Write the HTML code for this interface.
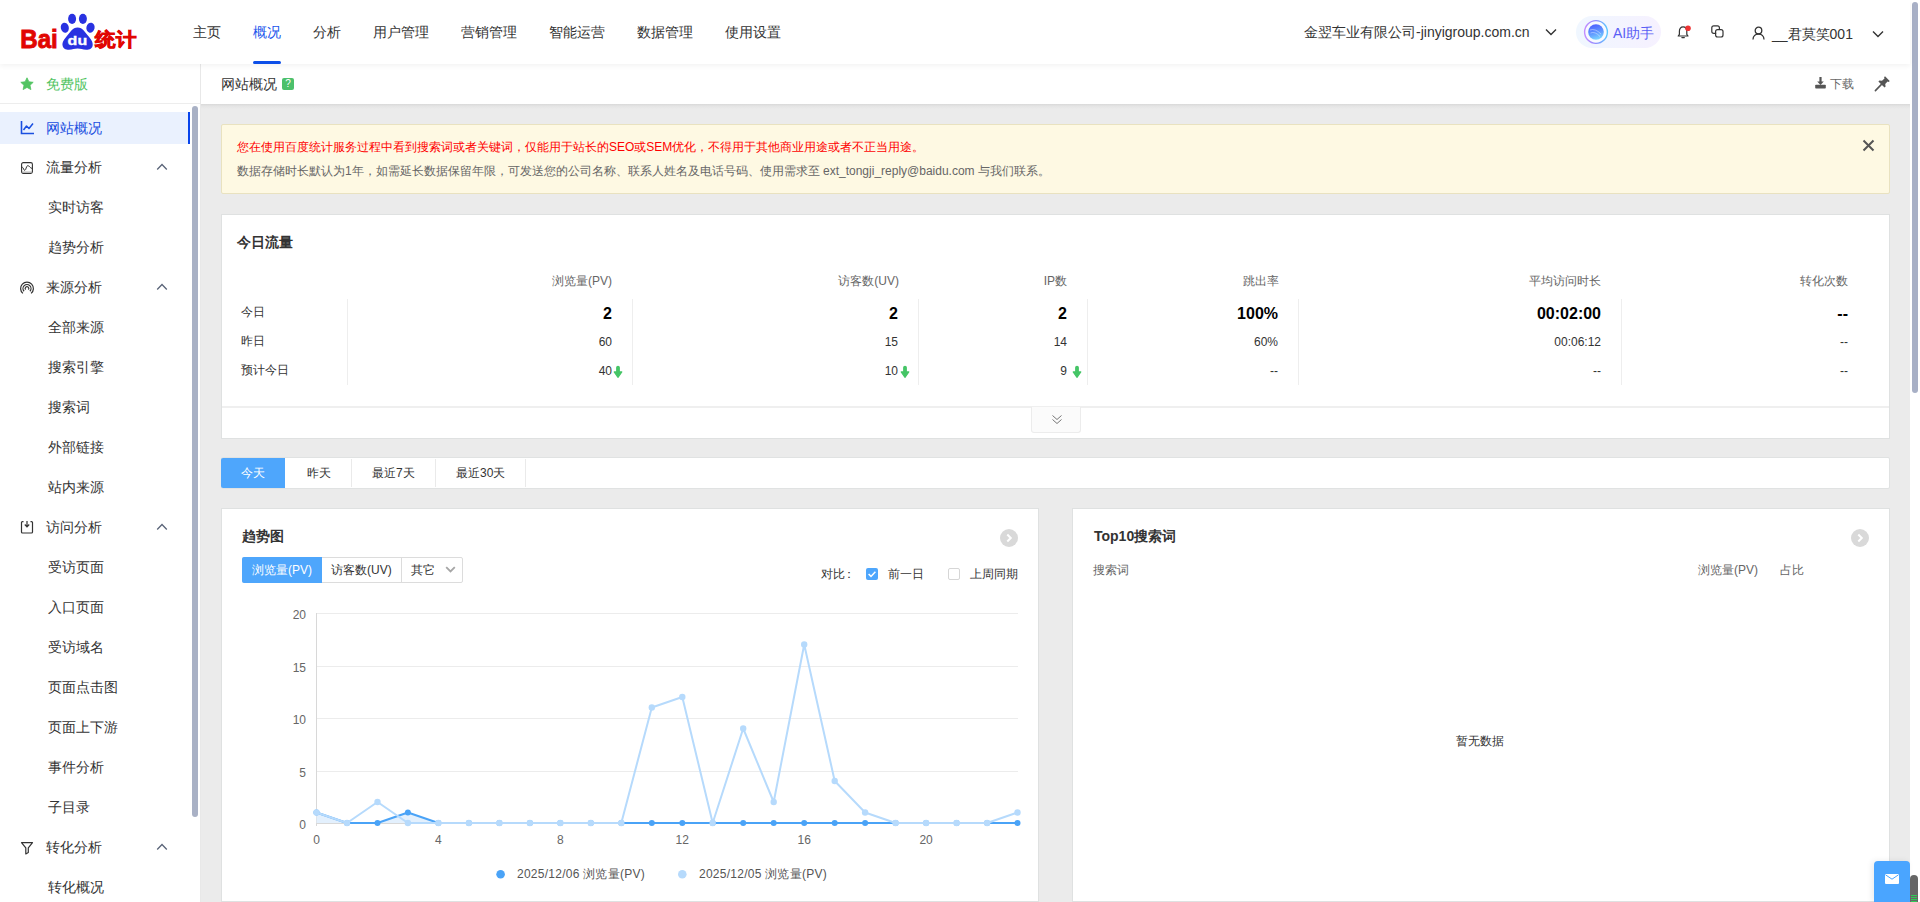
<!DOCTYPE html>
<html><head><meta charset="utf-8">
<style>
*{margin:0;padding:0;box-sizing:border-box}
html,body{width:1920px;height:902px;overflow:hidden;background:#fff}
body{font-family:"Liberation Sans",sans-serif;color:#333;font-size:12px;position:relative}
.a{position:absolute;white-space:nowrap}
svg{position:absolute;overflow:visible}
#hdr{position:absolute;left:0;top:0;width:1910px;height:64px;background:#fff;box-shadow:0 2px 5px rgba(0,0,0,.05);z-index:5}
.nav{position:absolute;top:23px;font-size:14px;line-height:18px;color:#333;white-space:nowrap}
#side{position:absolute;left:0;top:64px;width:201px;height:838px;background:#fff;border-right:1px solid #e8e8e8}
.mi{position:absolute;left:46px;font-size:14px;line-height:18px;color:#333;white-space:nowrap}
.si{position:absolute;left:48px;font-size:14px;line-height:18px;color:#333;white-space:nowrap}
.chev{position:absolute;left:156px;width:12px;height:8px}
#main{position:absolute;left:201px;top:64px;width:1709px;height:838px;background:#ebebeb}
.card{position:absolute;background:#fff;border:1px solid #dfe1e1}
.th{position:absolute;font-size:12px;line-height:16px;color:#666;white-space:nowrap;text-align:right}
.td{position:absolute;font-size:12px;line-height:16px;color:#333;white-space:nowrap;text-align:right}
.tb{position:absolute;font-size:16px;line-height:20px;color:#000;font-weight:bold;white-space:nowrap;text-align:right}
.vd{position:absolute;top:299px;width:1px;height:86px;background:#eee}
</style></head><body>
<!-- HEADER -->
<div id="hdr">
  <svg style="left:0;top:0" width="150" height="64" viewBox="0 0 150 64">
    <text x="20.3" y="48.2" font-family="Liberation Sans" font-weight="bold" font-size="26" fill="#e10602" stroke="#e10602" stroke-width="0.9" textLength="37.5" lengthAdjust="spacingAndGlyphs">Bai</text>
    <ellipse cx="72.1" cy="18.8" rx="4" ry="5.1" fill="#2932e1"/>
    <ellipse cx="82.9" cy="18.8" rx="4" ry="5.1" fill="#2932e1"/>
    <ellipse cx="64.8" cy="27.7" rx="4" ry="5.1" transform="rotate(-12 64.8 27.7)" fill="#2932e1"/>
    <ellipse cx="90.5" cy="27.7" rx="4.1" ry="5.1" transform="rotate(12 90.5 27.7)" fill="#2932e1"/>
    <path d="M77.6 27.5 C72.5 27.5 70 32.5 66.5 36.5 C63 40.5 62.3 43 62.5 45 C62.8 48.5 65.5 49.7 69 49.7 C72.5 49.7 74.5 48.6 77.6 48.6 C80.7 48.6 82.7 49.7 86.2 49.7 C89.7 49.7 92.5 48.5 92.7 45 C92.9 43 92.2 40.5 88.7 36.5 C85.2 32.5 82.7 27.5 77.6 27.5Z" fill="#2932e1"/>
    <text x="67.6" y="44.6" font-family="Liberation Sans" font-weight="bold" font-size="12.5" fill="#fff" stroke="#fff" stroke-width="0.3" textLength="19.6" lengthAdjust="spacingAndGlyphs">du</text>
    <text x="95.3" y="45.6" font-weight="bold" font-size="19.2" fill="#e10602" stroke="#e10602" stroke-width="0.7" textLength="41" lengthAdjust="spacingAndGlyphs" style="font-family:'Liberation Sans',sans-serif">统计</text>
  </svg>
  <div class="nav" style="left:193px">主页</div>
  <div class="nav" style="left:253px;color:#1a55ec">概况</div>
  <div class="a" style="left:253px;top:61px;width:28px;height:3px;background:#0d4fe8;border-radius:2px"></div>
  <div class="nav" style="left:313px">分析</div>
  <div class="nav" style="left:373px">用户管理</div>
  <div class="nav" style="left:461px">营销管理</div>
  <div class="nav" style="left:549px">智能运营</div>
  <div class="nav" style="left:637px">数据管理</div>
  <div class="nav" style="left:725px">使用设置</div>

  <div class="nav" style="left:1304px;top:23px">金翌车业有限公司-jinyigroup.com.cn</div>
  <svg style="left:1545px;top:28px" width="12" height="8" viewBox="0 0 12 8"><path d="M1 1.5 L6 6.5 L11 1.5" fill="none" stroke="#333" stroke-width="1.4"/></svg>
  <div class="a" style="left:1576px;top:16px;width:85px;height:32px;border-radius:16px;background:linear-gradient(90deg,#f0f7ff,#f6f1ff)"></div>
  <svg style="left:1583px;top:19px" width="26" height="26" viewBox="0 0 26 26">
    <defs><linearGradient id="ring" x1="0" y1="0.5" x2="1" y2="0.5"><stop offset="0" stop-color="#c48cff"/><stop offset="0.5" stop-color="#8f8cff"/><stop offset="1" stop-color="#5cc8ff"/></linearGradient>
    <linearGradient id="orb" x1="0.3" y1="0" x2="0.6" y2="1"><stop offset="0" stop-color="#3a4dff"/><stop offset="0.55" stop-color="#4f8dff"/><stop offset="1" stop-color="#6fd6ff"/></linearGradient></defs>
    <circle cx="13" cy="13" r="11.4" fill="#f8faff" stroke="url(#ring)" stroke-width="1.4"/>
    <circle cx="13" cy="13" r="7.8" fill="url(#orb)" opacity="0.9"/>
    <path d="M7 11 Q12 9 18 15 M7.5 14 Q12 12 17 17.5" fill="none" stroke="#fff" stroke-width="0.9" opacity="0.45"/>
  </svg>
  <div class="nav" style="left:1613px;top:24px;color:#5a5ef5">AI助手</div>
  <svg style="left:1677px;top:25px" width="14" height="14" viewBox="0 0 14 14">
    <path d="M1.2 11 L11 11 L9.8 9.4 L9.8 6.3 C9.8 3.6 8.4 1.9 6.1 1.9 C3.8 1.9 2.4 3.6 2.4 6.3 L2.4 9.4 Z" fill="none" stroke="#333" stroke-width="1.2" stroke-linejoin="round"/>
    <path d="M4.9 12.6 L7.3 12.6" stroke="#333" stroke-width="1.3" stroke-linecap="round"/>
    <circle cx="11" cy="3.2" r="2.8" fill="#ee3333"/>
  </svg>
  <svg style="left:1711px;top:25px" width="13" height="13" viewBox="0 0 13 13">
    <path d="M5.2 8.4 L2.8 8.4 Q0.8 8.4 0.8 6.4 L0.8 2.8 Q0.8 0.8 2.8 0.8 L6.4 0.8 Q8.4 0.8 8.4 2.8 L8.4 5" fill="none" stroke="#333" stroke-width="1.2"/>
    <path d="M4.6 6.6 Q4.6 4.6 6.6 4.6 L10 4.6 Q12 4.6 12 6.6 L12 10 Q12 12 10 12 L6.6 12 Q4.6 12 4.6 10 Z" fill="none" stroke="#333" stroke-width="1.2"/>
  </svg>
  <svg style="left:1752px;top:26px" width="13" height="14" viewBox="0 0 13 14">
    <circle cx="6.5" cy="4.5" r="3.3" fill="none" stroke="#333" stroke-width="1.3"/>
    <path d="M1 13.5 C1 10 3.5 8 6.5 8 C9.5 8 12 10 12 13.5" fill="none" stroke="#333" stroke-width="1.3"/>
  </svg>
  <div class="nav" style="left:1772px;top:25px">__君莫笑001</div>
  <svg style="left:1872px;top:30px" width="12" height="8" viewBox="0 0 12 8"><path d="M1 1.5 L6 6.5 L11 1.5" fill="none" stroke="#333" stroke-width="1.4"/></svg>
</div>
<!-- page scrollbar -->
<div class="a" style="left:1910px;top:0;width:10px;height:902px;background:#fff"></div>
<div class="a" style="left:1912px;top:2px;width:6px;height:391px;border-radius:3px;background:#a8b0c6"></div>
<!-- SIDEBAR -->
<div id="side">
  <svg style="left:20px;top:13px" width="14" height="14" viewBox="0 0 14 14"><path d="M7 0.8 L8.9 4.8 L13.2 5.3 L10 8.3 L10.9 12.6 L7 10.4 L3.1 12.6 L4 8.3 L0.8 5.3 L5.1 4.8Z" fill="#52c462" stroke="#52c462" stroke-width="0.8" stroke-linejoin="round"/></svg>
  <div class="mi" style="top:11px;color:#52c462">免费版</div>
  <div class="a" style="left:0;top:39px;width:200px;height:1px;background:#ededed"></div>
  <div class="a" style="left:0;top:48px;width:190px;height:32px;background:#eaf1fe"></div>
  <div class="a" style="left:188px;top:48px;width:2px;height:32px;background:#0844ec"></div>
  <svg style="left:20px;top:56px" width="15" height="15" viewBox="0 0 15 15"><path d="M1.5 1 L1.5 13.5 L14 13.5" fill="none" stroke="#1a4fe0" stroke-width="1.6"/><path d="M3.5 10 L6.5 6 L9 8.5 L13 3.5" fill="none" stroke="#1a4fe0" stroke-width="1.5" stroke-linejoin="round"/></svg>
  <div class="mi" style="top:55px;color:#1a4fe0">网站概况</div>

  <svg style="left:21px;top:162px;top:98px" width="12" height="12" viewBox="0 0 12 12"><rect x="0.6" y="0.6" width="10.8" height="10.8" rx="1.6" fill="none" stroke="#333" stroke-width="1.1"/><path d="M0.6 5.4 L1.6 5.4 C2.4 5.4 2.6 8.4 3.8 8.4 C5 8.4 5.2 3.6 6.8 3.6 C8.4 3.6 8.6 5.8 11.4 6.6" fill="none" stroke="#333" stroke-width="1"/><path d="M1 10 L11 10" stroke="#aaa" stroke-width="0.9"/></svg>
  <div class="mi" style="top:94px">流量分析</div>
  <svg class="chev" style="top:99px" viewBox="0 0 12 8"><path d="M1.2 6.5 L6 1.5 L10.8 6.5" fill="none" stroke="#5a6478" stroke-width="1.3"/></svg>
  <div class="si" style="top:134px">实时访客</div>
  <div class="si" style="top:174px">趋势分析</div>

  <svg style="left:20px;top:217px" width="14" height="14" viewBox="0 0 14 14"><path d="M2.88 12.4 A6.4 6.4 0 1 1 11.12 12.4" fill="none" stroke="#333" stroke-width="1.2"/><path d="M4.08 10.23 A4 4 0 1 1 9.92 10.23" fill="none" stroke="#333" stroke-width="1.2"/><path d="M5.53 8.53 A1.8 1.8 0 1 1 8.47 8.53" fill="none" stroke="#333" stroke-width="1.2"/></svg>
  <div class="mi" style="top:214px">来源分析</div>
  <svg class="chev" style="top:219px" viewBox="0 0 12 8"><path d="M1.2 6.5 L6 1.5 L10.8 6.5" fill="none" stroke="#5a6478" stroke-width="1.3"/></svg>
  <div class="si" style="top:254px">全部来源</div>
  <div class="si" style="top:294px">搜索引擎</div>
  <div class="si" style="top:334px">搜索词</div>
  <div class="si" style="top:374px">外部链接</div>
  <div class="si" style="top:414px">站内来源</div>

  <svg style="left:20px;top:456px" width="14" height="14" viewBox="0 0 14 14"><path d="M3.5 1.6 L2.5 1.6 Q1.5 1.6 1.5 2.6 L1.5 12 Q1.5 13 2.5 13 L11.5 13 Q12.5 13 12.5 12 L12.5 2.6 Q12.5 1.6 11.5 1.6 L10.5 1.6" fill="none" stroke="#333" stroke-width="1.2"/><path d="M7 1 L7 6.5 M4.8 4.5 L7 6.8 L9.2 4.5" fill="none" stroke="#333" stroke-width="1.2"/></svg>
  <div class="mi" style="top:454px">访问分析</div>
  <svg class="chev" style="top:459px" viewBox="0 0 12 8"><path d="M1.2 6.5 L6 1.5 L10.8 6.5" fill="none" stroke="#5a6478" stroke-width="1.3"/></svg>
  <div class="si" style="top:494px">受访页面</div>
  <div class="si" style="top:534px">入口页面</div>
  <div class="si" style="top:574px">受访域名</div>
  <div class="si" style="top:614px">页面点击图</div>
  <div class="si" style="top:654px">页面上下游</div>
  <div class="si" style="top:694px">事件分析</div>
  <div class="si" style="top:734px">子目录</div>

  <svg style="left:20px;top:777px" width="14" height="14" viewBox="0 0 14 14"><path d="M1.5 1.6 L12.5 1.6 L8.3 6.8 L8.3 11.5 L5.8 12.9 L5.8 6.8 Z" fill="none" stroke="#333" stroke-width="1.2" stroke-linejoin="round"/></svg>
  <div class="mi" style="top:774px">转化分析</div>
  <svg class="chev" style="top:779px" viewBox="0 0 12 8"><path d="M1.2 6.5 L6 1.5 L10.8 6.5" fill="none" stroke="#5a6478" stroke-width="1.3"/></svg>
  <div class="si" style="top:814px">转化概况</div>
  <div class="a" style="left:192px;top:42px;width:6px;height:711px;border-radius:3px;background:#a9b1c5"></div>
</div>
<!-- MAIN -->
<div id="main"></div>
<div class="a" style="left:201px;top:64px;width:1709px;height:40px;background:#fff"></div>
<div class="a" style="left:201px;top:104px;width:1709px;height:5px;background:linear-gradient(#d9d9d9,#e4e4e4 40%,#ebebeb)"></div>
<div class="a" style="left:221px;top:75px;font-size:14px;line-height:18px;color:#333">网站概况</div>
<div class="a" style="left:282px;top:78px;width:12px;height:12px;border-radius:2px;background:#4cc06b;color:#fff;font-size:10px;line-height:12px;text-align:center">?</div>
<svg style="left:1815px;top:77px" width="11" height="12" viewBox="0 0 11 12"><path d="M5.5 0 L5.5 5" stroke="#555" stroke-width="2.2"/><path d="M2.2 4.4 L5.5 8 L8.8 4.4Z" fill="#555"/><rect x="0.2" y="7.8" width="10.6" height="3.8" rx="0.8" fill="#555"/></svg>
<div class="a" style="left:1830px;top:76px;font-size:12px;line-height:16px;color:#666">下载</div>
<svg style="left:1875px;top:76px" width="15" height="15" viewBox="0 0 15 15"><path d="M10 0.3 L14.7 5 L13.8 5.9 L12.6 5.5 L10.2 8 L10.6 10.6 L9.6 11.6 L6.4 8.4 L3.4 5.4 L4.4 4.4 L7 4.8 L9.5 2.4 L9.1 1.2 Z" fill="#555"/><path d="M6.2 8.6 L0.4 14.6" stroke="#555" stroke-width="1.6" stroke-linecap="round"/></svg>

<!-- notice -->
<div class="a" style="left:221px;top:124px;width:1669px;height:70px;background:#fef9e3;border:1px solid #e9e2c0;border-radius:2px"></div>
<div class="a" style="left:237px;top:139px;font-size:12px;line-height:16px;color:#f00">您在使用百度统计服务过程中看到搜索词或者关键词，仅能用于站长的SEO或SEM优化，不得用于其他商业用途或者不正当用途。</div>
<div class="a" style="left:237px;top:163px;font-size:12px;line-height:16px;color:#666">数据存储时长默认为1年，如需延长数据保留年限，可发送您的公司名称、联系人姓名及电话号码、使用需求至 ext_tongji_reply@baidu.com 与我们联系。</div>
<svg style="left:1862px;top:139px" width="13" height="13" viewBox="0 0 13 13"><path d="M1.5 1.5 L11.5 11.5 M11.5 1.5 L1.5 11.5" stroke="#555" stroke-width="2"/></svg>

<!-- today card -->
<div class="card" style="left:221px;top:214px;width:1669px;height:225px"></div>
<div class="a" style="left:237px;top:233px;font-size:14px;line-height:18px;color:#333;font-weight:bold">今日流量</div>
<div class="th" style="right:1308px;top:273px">浏览量(PV)</div>
<div class="th" style="right:1021px;top:273px">访客数(UV)</div>
<div class="th" style="right:853px;top:273px">IP数</div>
<div class="th" style="right:641px;top:273px">跳出率</div>
<div class="th" style="right:319px;top:273px">平均访问时长</div>
<div class="th" style="right:72px;top:273px">转化次数</div>
<div class="a" style="left:241px;top:304px;font-size:12px;line-height:16px;color:#333">今日</div>
<div class="a" style="left:241px;top:333px;font-size:12px;line-height:16px;color:#333">昨日</div>
<div class="a" style="left:241px;top:362px;font-size:12px;line-height:16px;color:#333">预计今日</div>
<div class="vd" style="left:347px"></div>
<div class="vd" style="left:632px"></div>
<div class="vd" style="left:918px"></div>
<div class="vd" style="left:1087px"></div>
<div class="vd" style="left:1298px"></div>
<div class="vd" style="left:1621px"></div>
<div class="tb" style="right:1308px;top:304px">2</div>
<div class="tb" style="right:1022px;top:304px">2</div>
<div class="tb" style="right:853px;top:304px">2</div>
<div class="tb" style="right:642px;top:304px">100%</div>
<div class="tb" style="right:319px;top:304px">00:02:00</div>
<div class="tb" style="right:72px;top:304px">--</div>
<div class="td" style="right:1308px;top:334px">60</div>
<div class="td" style="right:1022px;top:334px">15</div>
<div class="td" style="right:853px;top:334px">14</div>
<div class="td" style="right:642px;top:334px">60%</div>
<div class="td" style="right:319px;top:334px">00:06:12</div>
<div class="td" style="right:72px;top:334px">--</div>
<div class="td" style="right:1308px;top:363px">40</div>
<div class="td" style="right:1022px;top:363px">10</div>
<div class="td" style="right:853px;top:363px">9</div>
<div class="td" style="right:642px;top:363px">--</div>
<div class="td" style="right:319px;top:363px">--</div>
<div class="td" style="right:72px;top:363px">--</div>
<svg style="left:613px;top:365px" width="10" height="13" viewBox="0 0 10 13"><rect x="3.1" y="0.8" width="3.8" height="8" rx="1.9" fill="#45c566"/><path d="M1.2 6.9 L8.8 6.9 L5 12.3Z" fill="#45c566" stroke="#45c566" stroke-width="1.2" stroke-linejoin="round"/></svg>
<svg style="left:900px;top:365px" width="10" height="13" viewBox="0 0 10 13"><rect x="3.1" y="0.8" width="3.8" height="8" rx="1.9" fill="#45c566"/><path d="M1.2 6.9 L8.8 6.9 L5 12.3Z" fill="#45c566" stroke="#45c566" stroke-width="1.2" stroke-linejoin="round"/></svg>
<svg style="left:1072px;top:365px" width="10" height="13" viewBox="0 0 10 13"><rect x="3.1" y="0.8" width="3.8" height="8" rx="1.9" fill="#45c566"/><path d="M1.2 6.9 L8.8 6.9 L5 12.3Z" fill="#45c566" stroke="#45c566" stroke-width="1.2" stroke-linejoin="round"/></svg>
<div class="a" style="left:222px;top:406px;width:1667px;height:2px;background:#efefef"></div>
<div class="a" style="left:1031px;top:407px;width:50px;height:26px;background:#fbfbfb;border:1px solid #ececec;border-top:none;border-radius:0 0 3px 3px"></div>
<svg style="left:1051px;top:414px" width="12" height="11" viewBox="0 0 12 11"><path d="M1.5 1.5 L6 5.5 L10.5 1.5 M1.5 5.5 L6 9.5 L10.5 5.5" fill="none" stroke="#777" stroke-width="1"/></svg>

<!-- tabs -->
<div class="a" style="left:221px;top:457px;width:1669px;height:32px;background:#fff;border:1px solid #e0e2e2;border-radius:2px"></div>
<div class="a" style="left:221px;top:458px;width:64px;height:30px;background:#4ea6fc;border-radius:2px 0 0 2px"></div>
<div class="a" style="left:351px;top:459px;width:1px;height:28px;background:#eaeaea"></div>
<div class="a" style="left:435px;top:459px;width:1px;height:28px;background:#eaeaea"></div>
<div class="a" style="left:525px;top:459px;width:1px;height:28px;background:#eaeaea"></div>
<div class="a" style="left:241px;top:465px;font-size:12px;line-height:16px;color:#fff">今天</div>
<div class="a" style="left:307px;top:465px;font-size:12px;line-height:16px;color:#333">昨天</div>
<div class="a" style="left:372px;top:465px;font-size:12px;line-height:16px;color:#333">最近7天</div>
<div class="a" style="left:456px;top:465px;font-size:12px;line-height:16px;color:#333">最近30天</div>
<!-- trend card -->
<div class="card" style="left:221px;top:508px;width:818px;height:394px"></div>
<div class="a" style="left:242px;top:527px;font-size:14px;line-height:18px;color:#333;font-weight:bold">趋势图</div>
<svg style="left:1000px;top:529px" width="18" height="18" viewBox="0 0 18 18"><circle cx="9" cy="9" r="9" fill="#d9d9d9"/><path d="M7.3 5.5 L10.8 9 L7.3 12.5" fill="none" stroke="#fff" stroke-width="2"/></svg>
<div class="a" style="left:242px;top:557px;width:221px;height:26px;border:1px solid #dcdcdc;border-radius:2px;background:#fff"></div>
<div class="a" style="left:242px;top:557px;width:80px;height:26px;background:#4ea6fc;border-radius:2px 0 0 2px"></div>
<div class="a" style="left:401px;top:558px;width:1px;height:24px;background:#dcdcdc"></div>
<div class="a" style="left:252px;top:562px;font-size:12px;line-height:16px;color:#fff">浏览量(PV)</div>
<div class="a" style="left:331px;top:562px;font-size:12px;line-height:16px;color:#333">访客数(UV)</div>
<div class="a" style="left:411px;top:562px;font-size:12px;line-height:16px;color:#333">其它</div>
<svg style="left:445px;top:566px" width="11" height="7" viewBox="0 0 11 7"><path d="M1.2 1.2 L5.5 5.5 L9.8 1.2" fill="none" stroke="#a6a6a6" stroke-width="1.8"/></svg>
<div class="a" style="left:821px;top:566px;font-size:12px;line-height:16px;color:#333">对比</div><div class="a" style="left:843px;top:566px;font-size:12px;line-height:16px;color:#333">：</div>
<div class="a" style="left:866px;top:568px;width:12px;height:12px;border-radius:2px;background:#4ea6fc"></div>
<svg style="left:866px;top:568px" width="12" height="12" viewBox="0 0 12 12"><path d="M2.6 6 L5 8.4 L9.4 3.8" fill="none" stroke="#fff" stroke-width="1.5"/></svg>
<div class="a" style="left:888px;top:566px;font-size:12px;line-height:16px;color:#333">前一日</div>
<div class="a" style="left:948px;top:568px;width:12px;height:12px;border-radius:2px;border:1px solid #d6d6d6;background:#fff"></div>
<div class="a" style="left:970px;top:566px;font-size:12px;line-height:16px;color:#333">上周同期</div>
<svg style="left:0;top:0" width="1920" height="902" viewBox="0 0 1920 902">
<line x1="316.5" y1="771.5" x2="1018" y2="771.5" stroke="#ececec" stroke-width="1"/>
<line x1="316.5" y1="718.5" x2="1018" y2="718.5" stroke="#ececec" stroke-width="1"/>
<line x1="316.5" y1="666.5" x2="1018" y2="666.5" stroke="#ececec" stroke-width="1"/>
<line x1="316.5" y1="613.5" x2="1018" y2="613.5" stroke="#ececec" stroke-width="1"/>
<line x1="316.5" y1="613" x2="316.5" y2="826" stroke="#d8d8d8" stroke-width="1"/>
<line x1="316.5" y1="823.5" x2="1018" y2="823.5" stroke="#d8d8d8" stroke-width="1"/>
<path d="M316.5,823.0 L316.5,812.5 L347.0,823.0 L377.5,823.0 L407.9,812.5 L438.4,823.0 L468.9,823.0 L499.4,823.0 L529.9,823.0 L560.3,823.0 L590.8,823.0 L621.3,823.0 L651.8,823.0 L682.3,823.0 L712.7,823.0 L743.2,823.0 L773.7,823.0 L804.2,823.0 L834.7,823.0 L865.1,823.0 L895.6,823.0 L926.1,823.0 L956.6,823.0 L987.1,823.0 L1017.5,823.0 L1017.5,823.0 Z" fill="#e3f0fd"/>
<polyline points="316.5,812.5 347.0,823.0 377.5,823.0 407.9,812.5 438.4,823.0 468.9,823.0 499.4,823.0 529.9,823.0 560.3,823.0 590.8,823.0 621.3,823.0 651.8,823.0 682.3,823.0 712.7,823.0 743.2,823.0 773.7,823.0 804.2,823.0 834.7,823.0 865.1,823.0 895.6,823.0 926.1,823.0 956.6,823.0 987.1,823.0 1017.5,823.0" fill="none" stroke="#4aa3f7" stroke-width="2" stroke-linejoin="round"/>
<circle cx="316.5" cy="812.5" r="3" fill="#4aa3f7"/>
<circle cx="347.0" cy="823.0" r="3" fill="#4aa3f7"/>
<circle cx="377.5" cy="823.0" r="3" fill="#4aa3f7"/>
<circle cx="407.9" cy="812.5" r="3" fill="#4aa3f7"/>
<circle cx="438.4" cy="823.0" r="3" fill="#4aa3f7"/>
<circle cx="468.9" cy="823.0" r="3" fill="#4aa3f7"/>
<circle cx="499.4" cy="823.0" r="3" fill="#4aa3f7"/>
<circle cx="529.9" cy="823.0" r="3" fill="#4aa3f7"/>
<circle cx="560.3" cy="823.0" r="3" fill="#4aa3f7"/>
<circle cx="590.8" cy="823.0" r="3" fill="#4aa3f7"/>
<circle cx="621.3" cy="823.0" r="3" fill="#4aa3f7"/>
<circle cx="651.8" cy="823.0" r="3" fill="#4aa3f7"/>
<circle cx="682.3" cy="823.0" r="3" fill="#4aa3f7"/>
<circle cx="712.7" cy="823.0" r="3" fill="#4aa3f7"/>
<circle cx="743.2" cy="823.0" r="3" fill="#4aa3f7"/>
<circle cx="773.7" cy="823.0" r="3" fill="#4aa3f7"/>
<circle cx="804.2" cy="823.0" r="3" fill="#4aa3f7"/>
<circle cx="834.7" cy="823.0" r="3" fill="#4aa3f7"/>
<circle cx="865.1" cy="823.0" r="3" fill="#4aa3f7"/>
<circle cx="895.6" cy="823.0" r="3" fill="#4aa3f7"/>
<circle cx="926.1" cy="823.0" r="3" fill="#4aa3f7"/>
<circle cx="956.6" cy="823.0" r="3" fill="#4aa3f7"/>
<circle cx="987.1" cy="823.0" r="3" fill="#4aa3f7"/>
<circle cx="1017.5" cy="823.0" r="3" fill="#4aa3f7"/>
<polyline points="316.5,812.5 347.0,823.0 377.5,802.0 407.9,823.0 438.4,823.0 468.9,823.0 499.4,823.0 529.9,823.0 560.3,823.0 590.8,823.0 621.3,823.0 651.8,707.5 682.3,697.0 712.7,823.0 743.2,728.5 773.7,802.0 804.2,644.5 834.7,781.0 865.1,812.5 895.6,823.0 926.1,823.0 956.6,823.0 987.1,823.0 1017.5,812.5" fill="none" stroke="#b6dafc" stroke-width="2" stroke-linejoin="round"/>
<circle cx="316.5" cy="812.5" r="3.2" fill="#b6dafc"/>
<circle cx="347.0" cy="823.0" r="3.2" fill="#b6dafc"/>
<circle cx="377.5" cy="802.0" r="3.2" fill="#b6dafc"/>
<circle cx="407.9" cy="823.0" r="3.2" fill="#b6dafc"/>
<circle cx="438.4" cy="823.0" r="3.2" fill="#b6dafc"/>
<circle cx="468.9" cy="823.0" r="3.2" fill="#b6dafc"/>
<circle cx="499.4" cy="823.0" r="3.2" fill="#b6dafc"/>
<circle cx="529.9" cy="823.0" r="3.2" fill="#b6dafc"/>
<circle cx="560.3" cy="823.0" r="3.2" fill="#b6dafc"/>
<circle cx="590.8" cy="823.0" r="3.2" fill="#b6dafc"/>
<circle cx="621.3" cy="823.0" r="3.2" fill="#b6dafc"/>
<circle cx="651.8" cy="707.5" r="3.2" fill="#b6dafc"/>
<circle cx="682.3" cy="697.0" r="3.2" fill="#b6dafc"/>
<circle cx="712.7" cy="823.0" r="3.2" fill="#b6dafc"/>
<circle cx="743.2" cy="728.5" r="3.2" fill="#b6dafc"/>
<circle cx="773.7" cy="802.0" r="3.2" fill="#b6dafc"/>
<circle cx="804.2" cy="644.5" r="3.2" fill="#b6dafc"/>
<circle cx="834.7" cy="781.0" r="3.2" fill="#b6dafc"/>
<circle cx="865.1" cy="812.5" r="3.2" fill="#b6dafc"/>
<circle cx="895.6" cy="823.0" r="3.2" fill="#b6dafc"/>
<circle cx="926.1" cy="823.0" r="3.2" fill="#b6dafc"/>
<circle cx="956.6" cy="823.0" r="3.2" fill="#b6dafc"/>
<circle cx="987.1" cy="823.0" r="3.2" fill="#b6dafc"/>
<circle cx="1017.5" cy="812.5" r="3.2" fill="#b6dafc"/>
<text x="306" y="829.0" text-anchor="end" font-size="12" fill="#666" font-family="Liberation Sans">0</text>
<text x="306" y="776.5" text-anchor="end" font-size="12" fill="#666" font-family="Liberation Sans">5</text>
<text x="306" y="724.0" text-anchor="end" font-size="12" fill="#666" font-family="Liberation Sans">10</text>
<text x="306" y="671.5" text-anchor="end" font-size="12" fill="#666" font-family="Liberation Sans">15</text>
<text x="306" y="619.0" text-anchor="end" font-size="12" fill="#666" font-family="Liberation Sans">20</text>
<text x="316.5" y="844" text-anchor="middle" font-size="12" fill="#666" font-family="Liberation Sans">0</text>
<text x="438.4" y="844" text-anchor="middle" font-size="12" fill="#666" font-family="Liberation Sans">4</text>
<text x="560.3" y="844" text-anchor="middle" font-size="12" fill="#666" font-family="Liberation Sans">8</text>
<text x="682.3" y="844" text-anchor="middle" font-size="12" fill="#666" font-family="Liberation Sans">12</text>
<text x="804.2" y="844" text-anchor="middle" font-size="12" fill="#666" font-family="Liberation Sans">16</text>
<text x="926.1" y="844" text-anchor="middle" font-size="12" fill="#666" font-family="Liberation Sans">20</text>
<circle cx="500.6" cy="874.2" r="4.3" fill="#4aa3f7"/>
<circle cx="682.3" cy="874.2" r="4.3" fill="#b6dafc"/>
</svg>
<div class="a" style="left:517px;top:866px;font-size:12px;line-height:16px;color:#555;letter-spacing:0.25px">2025/12/06 浏览量(PV)</div>
<div class="a" style="left:699px;top:866px;font-size:12px;line-height:16px;color:#555;letter-spacing:0.25px">2025/12/05 浏览量(PV)</div>

<!-- top10 card -->
<div class="card" style="left:1072px;top:508px;width:818px;height:394px"></div>
<div class="a" style="left:1094px;top:527px;font-size:14px;line-height:18px;color:#333;font-weight:bold">Top10搜索词</div>
<svg style="left:1851px;top:529px" width="18" height="18" viewBox="0 0 18 18"><circle cx="9" cy="9" r="9" fill="#d9d9d9"/><path d="M7.3 5.5 L10.8 9 L7.3 12.5" fill="none" stroke="#fff" stroke-width="2"/></svg>
<div class="a" style="left:1093px;top:562px;font-size:12px;line-height:16px;color:#666">搜索词</div>
<div class="a" style="left:1698px;top:562px;font-size:12px;line-height:16px;color:#666">浏览量(PV)</div>
<div class="a" style="left:1780px;top:562px;font-size:12px;line-height:16px;color:#666">占比</div>
<div class="a" style="left:1456px;top:733px;font-size:12px;line-height:16px;color:#333">暂无数据</div>

<!-- feedback -->
<div class="a" style="left:1874px;top:861px;width:36px;height:41px;background:#4aa5ff;border-radius:4px 4px 0 0;box-shadow:-2px 0 6px rgba(0,0,0,.08)"></div>
<svg style="left:1884px;top:873px" width="16" height="12" viewBox="0 0 16 12"><rect x="1" y="1" width="14" height="10" rx="1" fill="#fff"/><path d="M1.5 1.8 L8 6.2 L14.5 1.8" fill="none" stroke="#4aa5ff" stroke-width="1"/></svg>
<div class="a" style="left:1910px;top:875px;width:8px;height:27px;background:#666;border-radius:4px 4px 0 0"></div>
<div class="a" style="left:1911px;top:895px;width:6px;height:1px;background:#2ecc55"></div>
<div class="a" style="left:1911px;top:897px;width:6px;height:1px;background:#2ecc55"></div>
<div class="a" style="left:1911px;top:899px;width:6px;height:1px;background:#2ecc55"></div>
<div class="a" style="left:1911px;top:901px;width:6px;height:1px;background:#2ecc55"></div>
</body></html>
